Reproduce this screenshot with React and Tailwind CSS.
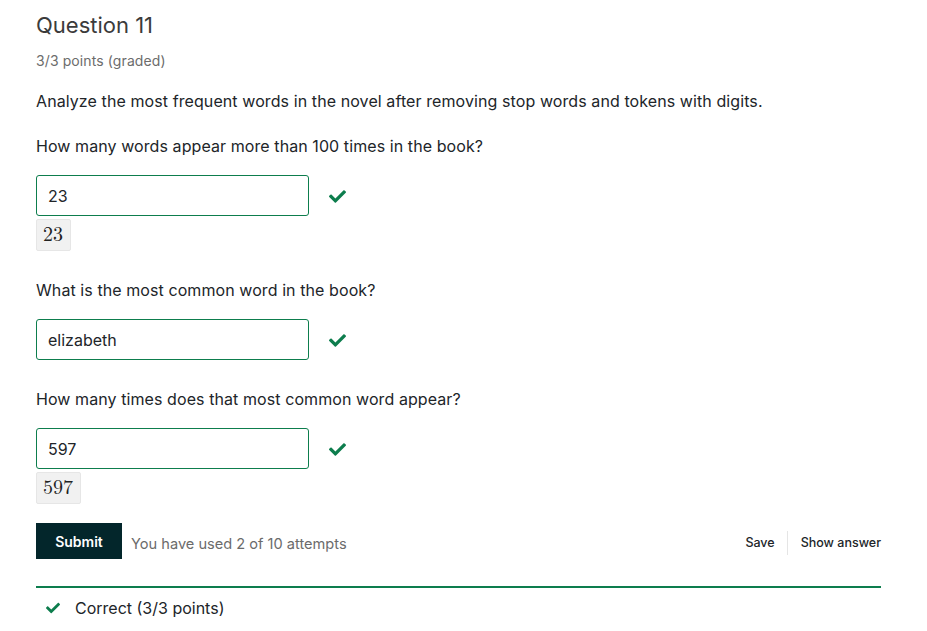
import React from "react";
import { FaCheck } from "react-icons/fa";

function Check({ className = "" }) {
  return <FaCheck className={"text-[#0d7d4d] " + className} />;
}

function Answer({ value, math }) {
  return (
    <div>
      <div className="flex items-center">
        <div className="w-[273px] h-[41px] border border-[#0d7d4d] rounded-[3px] flex items-center pl-[11px] text-[16px] text-[#212529] bg-white">
          {value}
        </div>
        <Check className="ml-[20px] w-[17px] h-[17px] mt-[2px]" />
      </div>
      {math && (
        <div className="mt-[3px] inline-flex items-center h-[32px] pl-[6px] pr-[7px] bg-[#f1f1f1] border border-[#e6e6e6] rounded-[2px] text-[20px] text-[#222] font-['Latin_Modern_Math','DejaVu_Serif','Liberation_Serif',serif]">
          {math}
        </div>
      )}
    </div>
  );
}

export default function App() {
  return (
    <div className="w-[927px] h-[631px] bg-white font-['Inter',sans-serif] text-[#212529] overflow-hidden">
      <div className="pl-[36px] w-[881px] pt-[12px]">
        <h2 className="text-[22px] leading-[26px] text-[#3b3b3b] font-normal">Question 11</h2>
        <div className="mt-[13px] text-[14px] tracking-[0.1px] leading-[20px] text-[#6c6c6c]">3/3 points (graded)</div>
        <p className="mt-[19px] text-[16px] tracking-[0.09px] leading-[22px]">
          Analyze the most frequent words in the novel after removing stop words and tokens with digits.
        </p>
        <p className="mt-[23px] text-[16px] tracking-[0.08px] leading-[22px]">How many words appear more than 100 times in the book?</p>
        <div className="mt-[18px]">
          <Answer value="23" math="23" />
        </div>
        <p className="mt-[28px] text-[16px] tracking-[0.08px] leading-[22px]">What is the most common word in the book?</p>
        <div className="mt-[18px]">
          <Answer value="elizabeth" />
        </div>
        <p className="mt-[28px] text-[16px] tracking-[0.08px] leading-[22px]">How many times does that most common word appear?</p>
        <div className="mt-[18px]">
          <Answer value="597" math="597" />
        </div>
        <div className="mt-[19px] flex items-center">
          <button className="w-[86px] h-[36px] bg-[#03262b] text-white text-[14px] font-semibold">Submit</button>
          <span className="ml-[9px] mt-[8px] text-[14.6px] text-[#6b6b6b]">You have used 2 of 10 attempts</span>
          <div className="ml-auto mt-[4px] flex items-center text-[12.5px] font-medium text-[#212529]">
            <span className="pr-[12px]">Save</span>
            <div className="w-px h-[24px] bg-[#e5e5e5]" />
            <span className="pl-[13px]">Show answer</span>
          </div>
        </div>
        <div className="mt-[27px] h-[2px] bg-[#0d7d4d]" />
        <div className="mt-[9px] flex items-center h-[22px] text-[16px]">
          <Check className="ml-[10px] w-[14px] h-[14px]" />
          <span className="ml-[15px]">Correct (3/3 points)</span>
        </div>
      </div>
    </div>
  );
}
